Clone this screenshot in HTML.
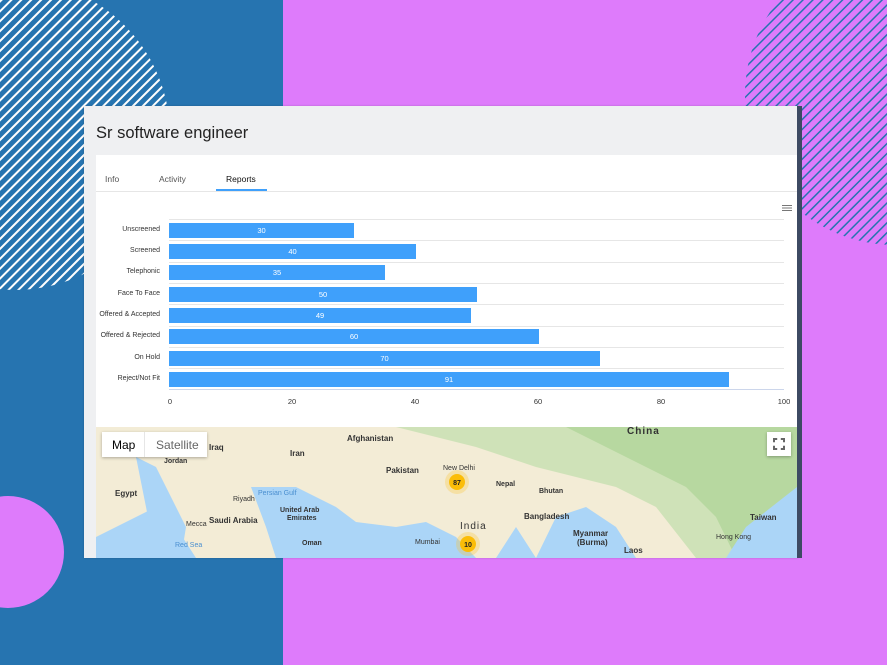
<!DOCTYPE html>
<html><head><meta charset="utf-8"><style>
*{margin:0;padding:0;box-sizing:border-box}
body{width:887px;height:665px;overflow:hidden;position:relative;font-family:"Liberation Sans",Arial,sans-serif;background:#de7bfb}
.abs{position:absolute}
.lbl{position:absolute;right:727px;font-size:7px;color:#333;text-align:right;white-space:nowrap}
.bar{position:absolute;left:169px;height:15px;background:#3fa0fb;color:#fff;font-size:7.5px;text-align:center;line-height:15px}
.grid{position:absolute;left:169px;width:615px;height:1px;background:#e6e6e6}
.tick{position:absolute;top:397px;font-size:7.5px;color:#333;transform:translateX(-50%)}
.m{position:absolute;font-size:8px;color:#333;font-weight:bold;white-space:nowrap}
</style></head><body>
<div class="abs" style="left:0;top:0;width:283px;height:665px;background:#2674b0"></div>
<svg class="abs" style="left:0;top:0" width="887" height="665">
<defs>
<clipPath id="c1"><circle cx="15" cy="135" r="155"/></clipPath>
<clipPath id="c2"><circle cx="895" cy="95" r="150"/></clipPath>
<pattern id="p1" width="7" height="7" patternUnits="userSpaceOnUse" patternTransform="rotate(45)"><rect width="2" height="7" fill="#fff"/></pattern>
<pattern id="p2" width="7" height="7" patternUnits="userSpaceOnUse" patternTransform="rotate(45)"><rect width="1.5" height="7" fill="#2674b0"/></pattern>
</defs>
<rect x="0" y="0" width="283" height="300" fill="url(#p1)" clip-path="url(#c1)"/>
<rect x="700" y="0" width="187" height="300" fill="url(#p2)" clip-path="url(#c2)"/>
<circle cx="8" cy="552" r="56" fill="#de7bfb"/>
</svg>
<div class="abs" style="left:84px;top:106px;width:714px;height:452px;background:#eff0f2;box-shadow:0 0 2px rgba(0,0,0,.2)"></div>
<div class="abs" style="left:797px;top:106px;width:5px;height:452px;background:#3d4a63"></div>
<div class="abs" style="left:96px;top:124px;font-size:16.5px;color:#222">Sr software engineer</div>
<div class="abs" style="left:96px;top:155px;width:701px;height:272px;background:#fff"></div>
<div class="abs" style="left:96px;top:191px;width:701px;height:1px;background:#e6e6e6"></div>
<div class="abs" style="left:105px;top:174px;font-size:8.5px;color:#555">Info</div>
<div class="abs" style="left:159px;top:174px;font-size:8.5px;color:#555">Activity</div>
<div class="abs" style="left:226px;top:174px;font-size:8.5px;color:#111">Reports</div>
<div class="abs" style="left:216px;top:189px;width:51px;height:2px;background:#3fa0fb"></div>
<div class="abs" style="left:782px;top:205px;width:10px;height:1px;background:#777;box-shadow:0 2.5px 0 #777,0 5px 0 #777"></div>
<div class="grid" style="top:219px"></div><div class="grid" style="top:240px"></div><div class="grid" style="top:262px"></div><div class="grid" style="top:283px"></div><div class="grid" style="top:304px"></div><div class="grid" style="top:326px"></div><div class="grid" style="top:347px"></div><div class="grid" style="top:368px"></div>
<div class="abs" style="left:169px;top:389px;width:615px;height:1px;background:#ccd6eb"></div>
<div class="lbl" style="top:226px">Unscreened</div><div class="bar" style="top:223px;width:185px">30</div>
<div class="lbl" style="top:247px">Screened</div><div class="bar" style="top:244px;width:247px">40</div>
<div class="lbl" style="top:268px">Telephonic</div><div class="bar" style="top:265px;width:216px">35</div>
<div class="lbl" style="top:290px">Face To Face</div><div class="bar" style="top:287px;width:308px">50</div>
<div class="lbl" style="top:311px">Offered &amp; Accepted</div><div class="bar" style="top:308px;width:302px">49</div>
<div class="lbl" style="top:332px">Offered &amp; Rejected</div><div class="bar" style="top:329px;width:370px">60</div>
<div class="lbl" style="top:354px">On Hold</div><div class="bar" style="top:351px;width:431px">70</div>
<div class="lbl" style="top:375px">Reject/Not Fit</div><div class="bar" style="top:372px;width:560px">91</div>
<div class="tick" style="left:170px">0</div><div class="tick" style="left:292px">20</div><div class="tick" style="left:415px">40</div><div class="tick" style="left:538px">60</div><div class="tick" style="left:661px">80</div><div class="tick" style="left:784px">100</div>
<svg class="abs" style="left:96px;top:427px" width="701" height="131">
<rect width="701" height="131" fill="#f3ecd6"/>
<path d="M300 0 L701 0 L701 131 L600 131 L560 80 L520 60 L440 40 L380 20 Z" fill="#cfe2b8"/>
<path d="M470 0 L701 0 L701 131 L640 131 L620 90 L590 60 Z" fill="#b7d8a0"/>
<path d="M0 131 L0 110 L60 80 L80 100 L100 131 Z" fill="#abd5f7"/>
<path d="M155 60 L200 60 L240 80 L260 95 L300 100 L330 95 L360 110 L380 131 L180 131 L170 100 Z" fill="#abd5f7"/>
<path d="M40 30 L60 40 L90 100 L85 131 L60 131 L50 80 Z" fill="#abd5f7"/>
<path d="M400 131 L420 100 L440 131 Z" fill="#abd5f7"/>
<path d="M440 131 L460 90 L490 80 L520 100 L540 131 Z" fill="#abd5f7"/>
<path d="M630 131 L650 100 L701 60 L701 131 Z" fill="#abd5f7"/>
<circle cx="361" cy="55" r="12" fill="#fbc531" opacity=".3"/><circle cx="361" cy="55" r="8" fill="#fbbd08"/>
<circle cx="372" cy="117" r="12" fill="#fbc531" opacity=".3"/><circle cx="372" cy="117" r="8" fill="#fbbd08"/>
<text x="361" y="58" font-size="7" font-weight="bold" text-anchor="middle" fill="#222" font-family="Liberation Sans">87</text>
<text x="372" y="120" font-size="7" font-weight="bold" text-anchor="middle" fill="#222" font-family="Liberation Sans">10</text>
</svg>
<div class="abs" style="left:102px;top:432px;width:105px;height:25px;background:#fff;box-shadow:0 1px 3px rgba(0,0,0,.3)"></div>
<div class="abs" style="left:144px;top:432px;width:1px;height:25px;background:#e6e6e6"></div>
<div class="abs" style="left:112px;top:438px;font-size:12px;color:#000">Map</div>
<div class="abs" style="left:156px;top:438px;font-size:12px;color:#666">Satellite</div>
<div class="abs" style="left:767px;top:432px;width:24px;height:24px;background:#fff;box-shadow:0 1px 3px rgba(0,0,0,.3)"></div>
<div class="abs" style="left:773px;top:438px;width:12px;height:12px;border:2px solid #666;clip-path:polygon(0 0,35% 0,35% 100%,65% 100%,65% 0,100% 0,100% 35%,0 35%,0 65%,100% 65%,100% 100%,0 100%)"></div>
<div class="m" style="left:627px;top:426px;font-size:10px;letter-spacing:1px">China</div>
<div class="m" style="left:347px;top:434px">Afghanistan</div>
<div class="m" style="left:209px;top:443px">Iraq</div>
<div class="m" style="left:290px;top:449px">Iran</div>
<div class="m" style="left:164px;top:458px;font-size:7px">Jordan</div>
<div class="m" style="left:386px;top:466px">Pakistan</div>
<div class="m" style="left:443px;top:465px;font-size:7px;font-weight:normal">New Delhi</div>
<div class="m" style="left:496px;top:481px;font-size:7px">Nepal</div>
<div class="m" style="left:539px;top:488px;font-size:7px">Bhutan</div>
<div class="m" style="left:115px;top:489px">Egypt</div>
<div class="m" style="left:233px;top:496px;font-size:7px;font-weight:normal">Riyadh</div>
<div class="m" style="left:258px;top:490px;font-size:7px;font-weight:normal;color:#4a8fd0">Persian Gulf</div>
<div class="m" style="left:280px;top:507px;font-size:7px">United Arab</div>
<div class="m" style="left:287px;top:515px;font-size:7px">Emirates</div>
<div class="m" style="left:209px;top:516px">Saudi Arabia</div>
<div class="m" style="left:524px;top:512px">Bangladesh</div>
<div class="m" style="left:186px;top:521px;font-size:7px;font-weight:normal">Mecca</div>
<div class="m" style="left:460px;top:521px;font-size:10px;letter-spacing:1px;font-weight:normal">India</div>
<div class="m" style="left:573px;top:529px">Myanmar</div>
<div class="m" style="left:577px;top:538px">(Burma)</div>
<div class="m" style="left:750px;top:513px">Taiwan</div>
<div class="m" style="left:302px;top:540px;font-size:7px">Oman</div>
<div class="m" style="left:175px;top:542px;font-size:7px;font-weight:normal;color:#4a8fd0">Red Sea</div>
<div class="m" style="left:415px;top:539px;font-size:7px;font-weight:normal">Mumbai</div>
<div class="m" style="left:716px;top:534px;font-size:7px;font-weight:normal">Hong Kong</div>
<div class="m" style="left:624px;top:546px">Laos</div>
</body></html>
